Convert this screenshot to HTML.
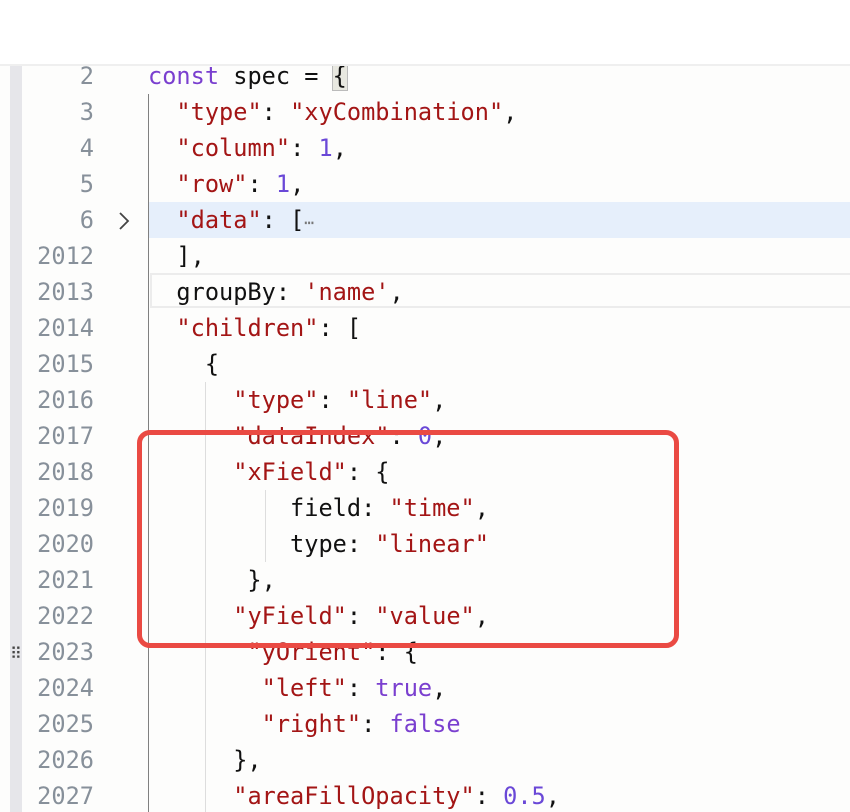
<!DOCTYPE html>
<html><head><meta charset="utf-8"><style>
html,body{margin:0;padding:0;width:850px;height:812px;overflow:hidden;background:#fff;}
.bd{position:absolute;left:0;top:64px;width:850px;height:2px;background:#efefef;}
.ed{position:absolute;left:0;top:66px;width:850px;height:746px;background:#fdfdfc;overflow:hidden;}
.strip{position:absolute;left:10px;top:0;width:12px;height:760px;background:#e6e6ea;}
.row{position:absolute;left:0;width:850px;height:36px;font-family:"DejaVu Sans Mono","Liberation Mono",monospace;font-size:23.6px;line-height:36px;white-space:pre;color:#111;}
.ln{position:absolute;right:756px;color:#87909a;}
.c{position:absolute;left:148px;}
.s{color:#a31515}.n{color:#6a48d7}.k{color:#7a3fcf}
.g{position:absolute;width:1px;}
</style></head><body>
<div class="bd"></div>
<div style="position:absolute;left:0;top:130px;width:6px;height:2px;background:#ccc"></div>
<div class="ed">
<div class="strip"></div>
<div style="position:absolute;left:10px;top:578px;color:#444;font-size:16px;font-family:'DejaVu Sans',sans-serif;">⠿</div>
<div style="position:absolute;left:148px;top:136px;width:702px;height:36px;background:#e6effb"></div>
<div style="position:absolute;left:150px;top:207px;width:700px;height:35px;border:2px solid #ececec;border-right:none;box-sizing:border-box;"></div>
<div class="g" style="left:148px;top:28px;height:720px;background:#808080"></div>
<div class="g" style="left:205px;top:316px;height:440px;background:#ddd"></div>
<div class="g" style="left:265px;top:424px;height:72px;background:#ddd"></div>
<svg style="position:absolute;left:116px;top:145px" width="16" height="20"><path d="M4 2 L12 10 L4 18" fill="none" stroke="#444" stroke-width="1.8"/></svg>

<div class="row" style="top:-8px"><span class="ln">2</span><span class="c"><span class="k">const</span> spec = <span style="background:#e8e8e0;outline:1px solid #bbb">{</span></span></div>
<div class="row" style="top:28px"><span class="ln">3</span><span class="c">  <span class="s">"type"</span>: <span class="s">"xyCombination"</span>,</span></div>
<div class="row" style="top:64px"><span class="ln">4</span><span class="c">  <span class="s">"column"</span>: <span class="n">1</span>,</span></div>
<div class="row" style="top:100px"><span class="ln">5</span><span class="c">  <span class="s">"row"</span>: <span class="n">1</span>,</span></div>
<div class="row" style="top:136px"><span class="ln">6</span><span class="c">  <span class="s">"data"</span>: [<span style="color:#777;font-size:16px">⋯</span></span></div>
<div class="row" style="top:172px"><span class="ln">2012</span><span class="c">  ],</span></div>
<div class="row" style="top:208px"><span class="ln">2013</span><span class="c">  groupBy: <span class="s">'name'</span>,</span></div>
<div class="row" style="top:244px"><span class="ln">2014</span><span class="c">  <span class="s">"children"</span>: [</span></div>
<div class="row" style="top:280px"><span class="ln">2015</span><span class="c">    {</span></div>
<div class="row" style="top:316px"><span class="ln">2016</span><span class="c">      <span class="s">"type"</span>: <span class="s">"line"</span>,</span></div>
<div class="row" style="top:352px"><span class="ln">2017</span><span class="c">      <span class="s">"dataIndex"</span>: <span class="n">0</span>,</span></div>
<div class="row" style="top:388px"><span class="ln">2018</span><span class="c">      <span class="s">"xField"</span>: {</span></div>
<div class="row" style="top:424px"><span class="ln">2019</span><span class="c">          field: <span class="s">"time"</span>,</span></div>
<div class="row" style="top:460px"><span class="ln">2020</span><span class="c">          type: <span class="s">"linear"</span></span></div>
<div class="row" style="top:496px"><span class="ln">2021</span><span class="c">       },</span></div>
<div class="row" style="top:532px"><span class="ln">2022</span><span class="c">      <span class="s">"yField"</span>: <span class="s">"value"</span>,</span></div>
<div class="row" style="top:568px"><span class="ln">2023</span><span class="c">       <span class="s">"yOrient"</span>: {</span></div>
<div class="row" style="top:604px"><span class="ln">2024</span><span class="c">        <span class="s">"left"</span>: <span class="k">true</span>,</span></div>
<div class="row" style="top:640px"><span class="ln">2025</span><span class="c">        <span class="s">"right"</span>: <span class="k">false</span></span></div>
<div class="row" style="top:676px"><span class="ln">2026</span><span class="c">      },</span></div>
<div class="row" style="top:712px"><span class="ln">2027</span><span class="c">      <span class="s">"areaFillOpacity"</span>: <span class="n">0.5</span>,</span></div>

<div style="position:absolute;left:137px;top:364px;width:542px;height:218px;border:5px solid #ea4a43;border-radius:13px;box-sizing:border-box;background:rgba(255,255,255,0.0)"></div>
</div>
</body></html>
